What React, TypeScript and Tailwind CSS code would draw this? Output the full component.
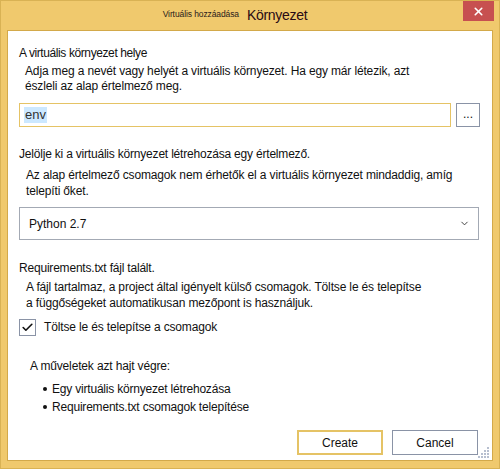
import { Check, ChevronDown, X } from 'lucide-react';

const font = { fontFamily: '"Liberation Sans", Arial, sans-serif' };

const gripDots = [[9, 0], [6, 3], [9, 3], [3, 6], [6, 6], [9, 6], [0, 9], [3, 9], [6, 9], [9, 9]];

function Grip() {
  return (
    <svg width="11" height="11" className="absolute right-[3px] bottom-[2px]">
      {gripDots.map(([x, y], i) => (
        <rect key={i} x={x} y={y} width="2" height="2" fill="#b7bfcf" />
      ))}
    </svg>
  );
}

function Bullet({ children }: { children: string }) {
  return (
    <li className="flex items-center gap-[5px]">
      <span className="w-[4px] h-[4px] rounded-full bg-[#111]" />
      {children}
    </li>
  );
}

export default function App() {
  return (
    <div
      className="w-[500px] h-[469px] bg-[#f0c96d] border border-[#d9b254] flex flex-col text-[12px] text-[#111]"
      style={font}
    >
      <div className="h-[29px] relative flex items-end justify-center pb-[4px]">
        <div className="flex items-end gap-[8px] ml-[-30px]">
          <span className="text-[8.5px] text-[#2a1a1a] mb-[5px] tracking-[-0.1px]">Virtuális hozzáadása</span>
          <span className="text-[14px] text-[#2a0a14] tracking-[-0.3px]">Környezet</span>
        </div>
        <div className="absolute right-[5px] top-0 w-[31px] h-[20px] bg-[#c75050] flex items-center justify-center">
          <X size={13} strokeWidth={3} color="#fff" />
        </div>
      </div>
      <div className="mx-[6px] flex-1 mb-[7px] bg-white border border-[#d3a94a] relative">
        <div className="pl-[11px] pr-[12px] pt-[14px] flex flex-col">
          <div className="leading-[16px] tracking-[-0.4px]">A virtuális környezet helye</div>
          <div className="pl-[6px] mt-[3px] leading-[15px] tracking-[-0.15px]">
            <div>Adja meg a nevét vagy helyét a virtuális környezet. Ha egy már létezik, azt</div>
            <div>észleli az alap értelmező meg.</div>
          </div>
          <div className="flex gap-[5px] mt-[9px]">
            <div className="w-[432px] h-[24px] border border-[#e5c365] flex items-center pl-[4px]">
              <span className="bg-[#cce8ff] px-[1px] text-[13px] leading-[16px] text-[#333]">env</span>
            </div>
            <div className="w-[24px] h-[24px] border border-[#8a93a6] flex items-center justify-center pb-[2px]">
              ...
            </div>
          </div>

          <div className="leading-[16px] mt-[19px] tracking-[-0.2px]">
            Jelölje ki a virtuális környezet létrehozása egy értelmező.
          </div>
          <div className="pl-[7px] mt-[5px] leading-[16px] tracking-[-0.15px]">
            <div>Az alap értelmező csomagok nem érhetők el a virtuális környezet mindaddig, amíg</div>
            <div>telepíti őket.</div>
          </div>
          <div className="mt-[8px] w-[460px] h-[33px] border border-[#a3a9b4] flex items-center justify-between pl-[9px] pr-[8px]">
            <span>Python 2.7</span>
            <ChevronDown size={11} strokeWidth={2} color="#333" />
          </div>

          <div className="leading-[16px] mt-[20px] tracking-[-0.2px]">Requirements.txt fájl talált.</div>
          <div className="pl-[7px] mt-[3px] leading-[16px] tracking-[-0.15px]">
            <div>A fájl tartalmaz, a project által igényelt külső csomagok. Töltse le és telepítse</div>
            <div>a függőségeket automatikusan mezőpont is használjuk.</div>
          </div>
          <div className="flex items-center mt-[7px] gap-[8px]">
            <div className="w-[17px] h-[17px] border border-[#8a93a6] flex items-center justify-center">
              <Check size={13} strokeWidth={3} color="#111" />
            </div>
            <span className="tracking-[-0.15px]">Töltse le és telepítse a csomagok</span>
          </div>

          <div className="pl-[11px] mt-[22px] leading-[16px] tracking-[-0.15px]">A műveletek azt hajt végre:</div>
          <ul className="pl-[24px] mt-[6px] leading-[18px] tracking-[-0.2px]">
            <Bullet>Egy virtuális környezet létrehozása</Bullet>
            <Bullet>Requirements.txt csomagok telepítése</Bullet>
          </ul>

          <div className="flex justify-end gap-[9px] mt-[14px] pr-[2px]">
            <div className="w-[86px] h-[25px] border-2 border-[#e5c365] flex items-center justify-center">Create</div>
            <div className="w-[86px] h-[25px] border border-[#8a93a6] flex items-center justify-center">Cancel</div>
          </div>
        </div>
        <Grip />
      </div>
    </div>
  );
}
